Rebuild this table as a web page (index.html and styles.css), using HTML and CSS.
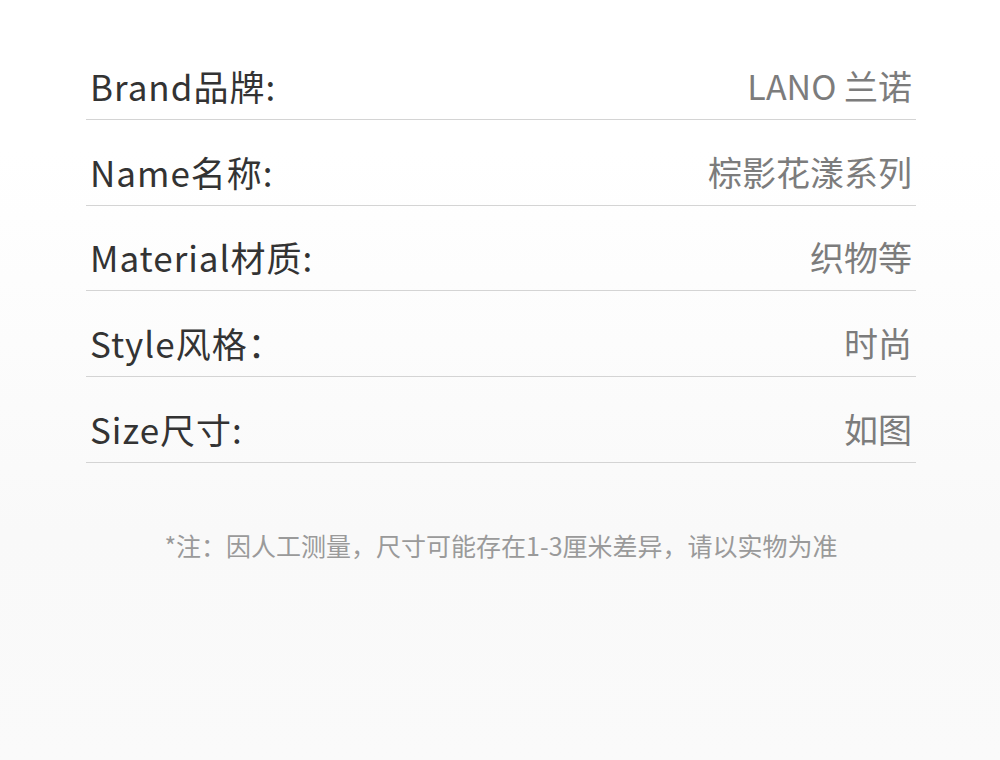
FILE: index.html
```html
<!DOCTYPE html>
<html lang="zh-CN">
<head>
<meta charset="utf-8">
<title>商品参数</title>
<link rel="stylesheet" href="styles.css">
</head>
<body>
<div class="page">
  <div class="specs">
    <div class="row"><span class="label">Brand品牌:</span><span class="value">LANO 兰诺</span></div>
    <div class="row"><span class="label">Name名称:</span><span class="value">棕影花漾系列</span></div>
    <div class="row"><span class="label">Material材质:</span><span class="value">织物等</span></div>
    <div class="row"><span class="label">Style风格：</span><span class="value">时尚</span></div>
    <div class="row"><span class="label">Size尺寸:</span><span class="value">如图</span></div>
  </div>
  <p class="note">*注：因人工测量，尺寸可能存在1-3厘米差异，请以实物为准</p>
</div>
</body>
</html>
```
FILE: styles.css
```css
html, body {
  margin: 0;
  padding: 0;
}
body {
  width: 1000px;
  height: 760px;
  background: linear-gradient(to bottom, #ffffff 0%, #ffffff 20%, #f9f9f9 70%, #fafafa 100%);
  font-family: "Noto Sans CJK SC", "Noto Sans", sans-serif;
  overflow: hidden;
}
.page {
  padding: 34px 84px 0 86px;
}
.specs {
  display: flex;
  flex-direction: column;
}
.row {
  display: flex;
  justify-content: space-between;
  align-items: center;
  height: 84.75px;
  padding: 0 4px 0 4px;
  box-sizing: content-box;
  border-bottom: 1.5px solid #d4d4d4;
}
.row .label {
  font-size: 35px;
  letter-spacing: 1px;
  color: #333333;
  line-height: 50px;
  padding-top: 19px;
}
.row .value {
  font-size: 34px;
  color: #7c7c7c;
  line-height: 50px;
  padding-top: 19px;
}
.note {
  margin: 62px 0 0;
  text-align: center;
  font-size: 25px;
  color: #9a9a9a;
  line-height: 40px;
}
```
